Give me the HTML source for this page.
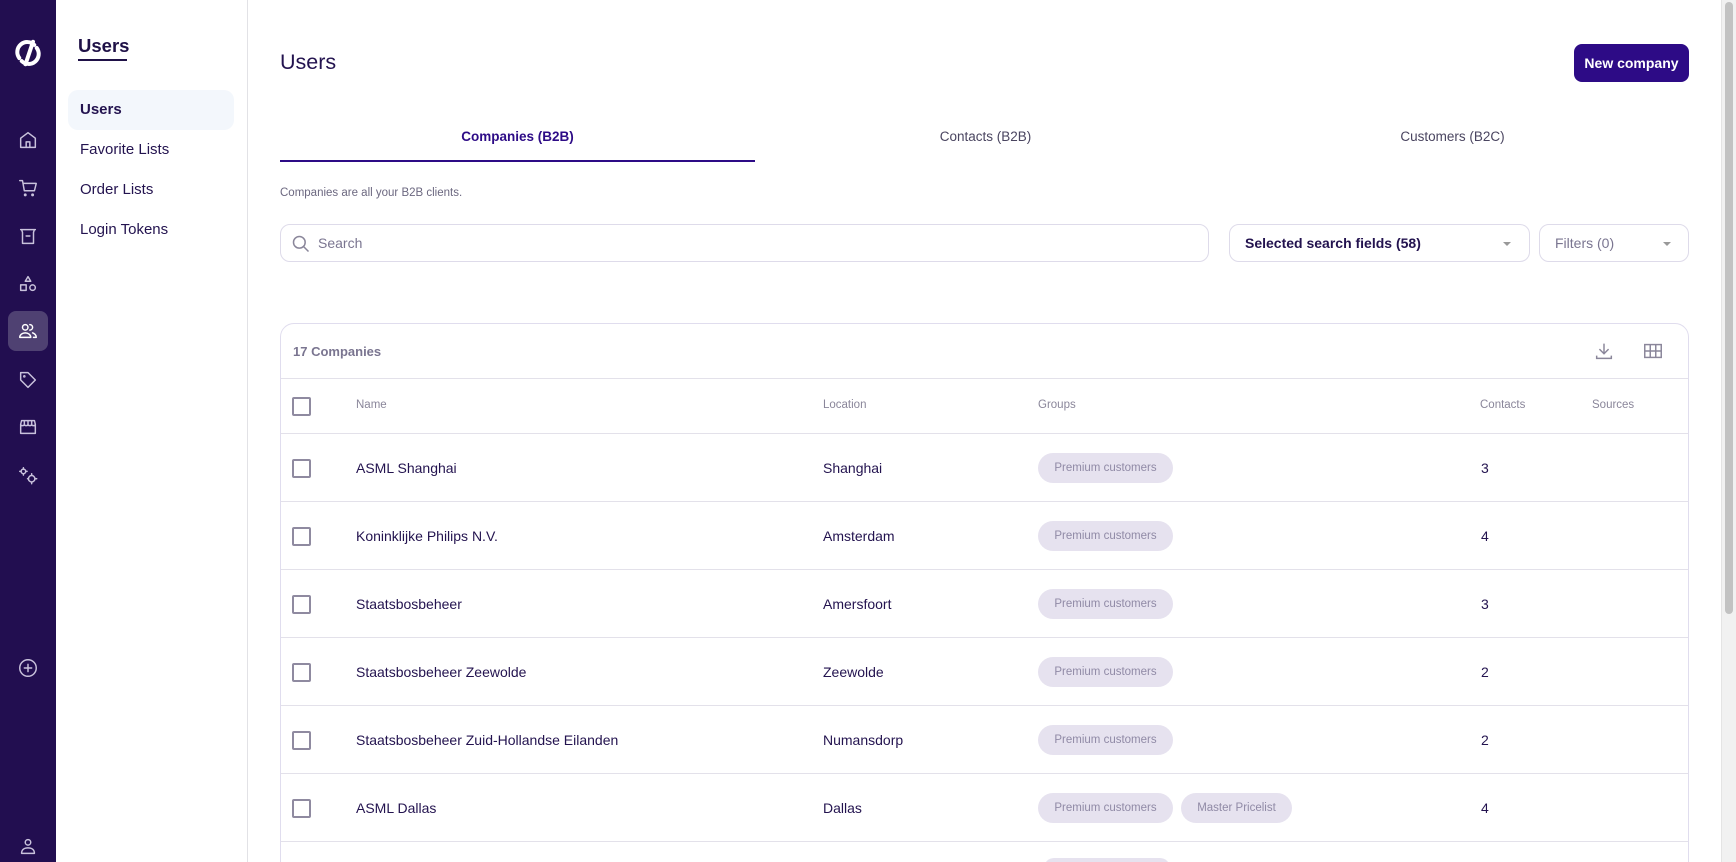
<!DOCTYPE html>
<html style="overflow:hidden;height:862px"><head><meta charset="utf-8"><style>
*{box-sizing:border-box;margin:0;padding:0}
body{width:1736px;height:862px;overflow:hidden;font-family:"Liberation Sans",sans-serif;background:#fff;position:relative;color:#23134f}
.side{position:absolute;left:0;top:0;width:56px;height:862px;background:#220e50}
.ic{position:absolute;left:8px;width:40px;height:40px;display:flex;align-items:center;justify-content:center}
.ic svg{width:22px;height:22px;fill:none;stroke:#c9c2dc;stroke-width:1.6;stroke-linecap:round;stroke-linejoin:round}
.sub{position:absolute;left:56px;top:0;width:192px;height:862px;border-right:1px solid #e2e2e6}
.abs{position:absolute}
.menu{position:absolute;left:12px;width:166px;height:40px;border-radius:10px;padding-left:12px;line-height:40px;font-size:15px;color:#23134f}
.tab{position:absolute;top:129px;font-size:13.5px;color:#4a4560;width:475px;text-align:center}
.box{position:absolute;border:1px solid #dedbea;border-radius:10px;height:38px}
.card{position:absolute;left:280px;top:323px;width:1409px;height:560px;border:1px solid #e0ddee;border-radius:14px}
.cb{position:absolute;left:12px;width:19px;height:19px;border:2px solid #8f8aa0;border-radius:2px}
.t{position:absolute;font-size:14px;color:#23134f}
.th{position:absolute;font-size:11.5px;color:#8a869a;top:399px}
.chip{position:absolute;height:30px;border-radius:15px;background:#e6e2ef;color:#908aa6;font-size:11.5px;line-height:30px;padding:0 12px;width:135px;text-align:center}
</style></head><body>
<div class="side">
 <div class="ic" style="top:33px"><svg viewBox="0 0 24 24" style="width:30px;height:30px;stroke:#fff;stroke-width:3.2"><path d="M17 5.5A8 8 0 0 0 5 16"/><path d="M7 18.5A8 8 0 0 0 19 8"/><path d="M16 3l-6 18"/></svg></div>
 <div class="ic" style="top:120px"><svg viewBox="0 0 24 24"><path d="M4 10l8-6 8 6v10H4z"/><path d="M10 20v-6h4v6"/></svg></div>
 <div class="ic" style="top:168px"><svg viewBox="0 0 24 24"><path d="M3 4h3l2 11h11l2-8H7"/><circle cx="9" cy="19.5" r=".8"/><circle cx="17" cy="19.5" r=".8"/></svg></div>
 <div class="ic" style="top:216px"><svg viewBox="0 0 24 24"><path d="M4 5h16M5 5l1 3v12h12V8l1-3M10 12h4"/></svg></div>
 <div class="ic" style="top:264px"><svg viewBox="0 0 24 24"><path d="M12 4l3 5H9z"/><rect x="4" y="13" width="6" height="6"/><circle cx="17" cy="16" r="3"/></svg></div>
 <div class="ic" style="top:311px;background:#4f4172;border-radius:8px"><svg viewBox="0 0 24 24" style="stroke:#fff"><circle cx="9" cy="8" r="3"/><path d="M3 19c0-3 3-5 6-5s6 2 6 5z"/><path d="M14 5a3 3 0 0 1 0 6M17 14c2 1 4 2 4 5h-3"/></svg></div>
 <div class="ic" style="top:360px"><svg viewBox="0 0 24 24"><path d="M4 4h8l8 8-8 8-8-8z"/><circle cx="8" cy="8" r=".6"/></svg></div>
 <div class="ic" style="top:407px"><svg viewBox="0 0 24 24"><path d="M4 9l1-4h14l1 4M4 9v10h16V9M4 9c0 2 4 2 4 0 0 2 4 2 4 0 0 2 4 2 4 0 0 2 4 2 4 0M8 5v4M12 5v4M16 5v4"/></svg></div>
 <div class="ic" style="top:456px"><svg viewBox="0 0 24 24"><circle cx="7" cy="7" r="2.5"/><circle cx="16" cy="15" r="3.5"/><path d="M7 3v1.5M7 9.5V11M3 7h1.5M9.5 7H11M16 9.5V11M16 19v1.5M11.5 15H12.5M20 15h1.5"/></svg></div>
 <div class="ic" style="top:648px"><svg viewBox="0 0 24 24"><circle cx="12" cy="12" r="9"/><path d="M12 8v8M8 12h8"/></svg></div>
 <div class="ic" style="top:826px"><svg viewBox="0 0 24 24"><circle cx="12" cy="8" r="3"/><path d="M5 20c0-4 3-6 7-6s7 2 7 6z"/></svg></div>
</div>
<div class="sub">
 <div class="abs" style="left:22px;top:35px;font-size:18.5px;font-weight:bold;color:#1f1147">Users</div>
 <div class="abs" style="left:22px;top:59px;width:49px;height:2px;background:#1f1147"></div>
 <div class="menu" style="top:90px;background:#f3f7fc;font-weight:bold">Users</div>
 <div class="menu" style="top:130px">Favorite Lists</div>
 <div class="menu" style="top:170px">Order Lists</div>
 <div class="menu" style="top:210px">Login Tokens</div>
</div>
<div class="abs" style="left:280px;top:50px;font-size:21.5px;color:#23134f">Users</div>
<div class="abs" style="left:1574px;top:44px;width:115px;height:38px;background:#2d0b86;border-radius:8px;color:#fff;font-size:14px;font-weight:bold;text-align:center;line-height:38px">New company</div>
<div class="tab" style="left:280px;color:#2d0b86;font-weight:bold">Companies (B2B)</div>
<div class="abs" style="left:280px;top:160px;width:475px;height:2px;background:#2d0b86"></div>
<div class="tab" style="left:748px">Contacts (B2B)</div>
<div class="tab" style="left:1215px">Customers (B2C)</div>
<div class="abs" style="left:280px;top:187px;font-size:11.5px;color:#6c6880">Companies are all your B2B clients.</div>
<div class="box" style="left:280px;top:224px;width:929px">
 <svg style="position:absolute;left:10px;top:9px" width="20" height="20" viewBox="0 0 24 24" fill="none" stroke="#8a869a" stroke-width="1.8"><circle cx="10" cy="10" r="7"/><path d="M15 15l6 6"/></svg>
 <div class="abs" style="left:37px;top:10px;font-size:14px;color:#7a7590">Search</div>
</div>
<div class="box" style="left:1229px;top:224px;width:301px">
 <div class="abs" style="left:15px;top:10px;font-size:14px;font-weight:bold;color:#23134f">Selected search fields (58)</div>
 <div class="abs" style="left:273px;top:17px;border:4px solid transparent;border-top:4px solid #999"></div>
</div>
<div class="box" style="left:1539px;top:224px;width:150px">
 <div class="abs" style="left:15px;top:10px;font-size:14px;color:#7a7590">Filters (0)</div>
 <div class="abs" style="left:123px;top:17px;border:4px solid transparent;border-top:4px solid #999"></div>
</div>
<div class="card"></div>
<div class="abs" style="left:293px;top:344px;font-size:13px;font-weight:bold;color:#7a7590">17 Companies</div>
<svg class="abs" style="left:1593px;top:340px" width="22" height="22" viewBox="0 0 24 24" fill="none" stroke="#8a869a" stroke-width="1.6"><path d="M12 4v11M7 10l5 5 5-5M4 17v3h16v-3"/></svg>
<svg class="abs" style="left:1642px;top:340px" width="22" height="22" viewBox="0 0 24 24" fill="none" stroke="#8a869a" stroke-width="1.6"><rect x="3" y="5" width="18" height="14"/><path d="M3 12h18M9 5v14M15 5v14"/></svg>
<div class="abs" style="left:281px;top:378px;width:1407px;height:1px;background:#e3e1ea"></div>
<div class="abs" style="left:281px;top:433px;width:1407px;height:1px;background:#e3e1ea"></div>
<div class="cb" style="left:292px;top:397px"></div>
<div class="th" style="left:356px">Name</div><div class="th" style="left:823px">Location</div><div class="th" style="left:1038px">Groups</div><div class="th" style="left:1480px">Contacts</div><div class="th" style="left:1592px">Sources</div>

<div class="cb" style="left:292px;top:459px"></div><div class="t" style="left:356px;top:460px">ASML Shanghai</div><div class="t" style="left:823px;top:460px">Shanghai</div><div class="chip" style="left:1038px;top:453px">Premium customers</div><div class="t" style="left:1481px;top:460px">3</div>
<div class="abs" style="left:281px;top:501px;width:1407px;height:1px;background:#e3e1ea"></div>
<div class="cb" style="left:292px;top:527px"></div><div class="t" style="left:356px;top:528px">Koninklijke Philips N.V.</div><div class="t" style="left:823px;top:528px">Amsterdam</div><div class="chip" style="left:1038px;top:521px">Premium customers</div><div class="t" style="left:1481px;top:528px">4</div>
<div class="abs" style="left:281px;top:569px;width:1407px;height:1px;background:#e3e1ea"></div>
<div class="cb" style="left:292px;top:595px"></div><div class="t" style="left:356px;top:596px">Staatsbosbeheer</div><div class="t" style="left:823px;top:596px">Amersfoort</div><div class="chip" style="left:1038px;top:589px">Premium customers</div><div class="t" style="left:1481px;top:596px">3</div>
<div class="abs" style="left:281px;top:637px;width:1407px;height:1px;background:#e3e1ea"></div>
<div class="cb" style="left:292px;top:663px"></div><div class="t" style="left:356px;top:664px">Staatsbosbeheer Zeewolde</div><div class="t" style="left:823px;top:664px">Zeewolde</div><div class="chip" style="left:1038px;top:657px">Premium customers</div><div class="t" style="left:1481px;top:664px">2</div>
<div class="abs" style="left:281px;top:705px;width:1407px;height:1px;background:#e3e1ea"></div>
<div class="cb" style="left:292px;top:731px"></div><div class="t" style="left:356px;top:732px">Staatsbosbeheer Zuid-Hollandse Eilanden</div><div class="t" style="left:823px;top:732px">Numansdorp</div><div class="chip" style="left:1038px;top:725px">Premium customers</div><div class="t" style="left:1481px;top:732px">2</div>
<div class="abs" style="left:281px;top:773px;width:1407px;height:1px;background:#e3e1ea"></div>
<div class="cb" style="left:292px;top:799px"></div><div class="t" style="left:356px;top:800px">ASML Dallas</div><div class="t" style="left:823px;top:800px">Dallas</div><div class="chip" style="left:1038px;top:793px">Premium customers</div><div class="chip" style="left:1181px;top:793px;width:111px">Master Pricelist</div><div class="t" style="left:1481px;top:800px">4</div>
<div class="abs" style="left:281px;top:841px;width:1407px;height:1px;background:#e3e1ea"></div>
<div class="abs" style="left:1044px;top:858px;width:126px;height:20px;border-radius:10px;background:#e6e2ef"></div>
<div class="abs" style="left:1721px;top:0;width:15px;height:862px;background:#f1f1f1;border-left:1px solid #e4e4e4"></div>
<div class="abs" style="left:1725px;top:2px;width:8px;height:612px;background:#c2c2c2;border-radius:4px"></div>
</body></html>
